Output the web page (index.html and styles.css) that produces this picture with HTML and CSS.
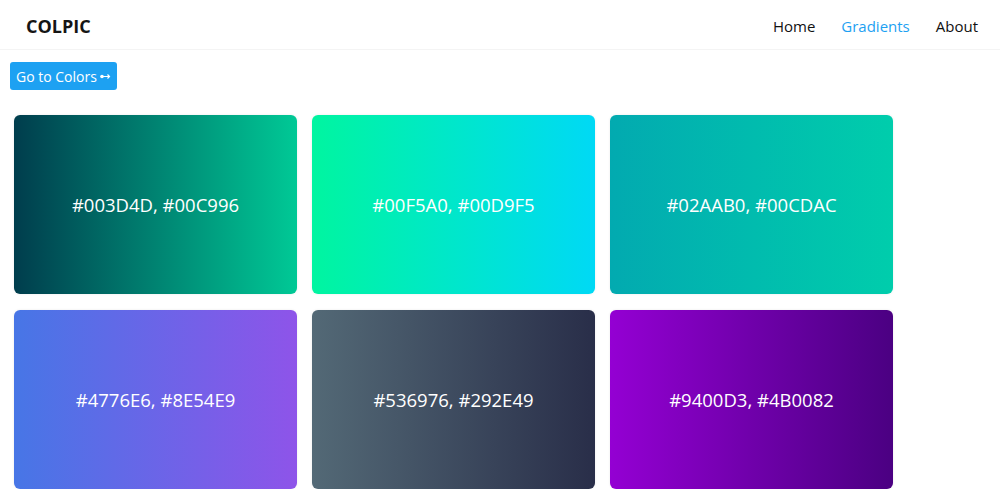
FILE: index.html
```html
<!DOCTYPE html>
<html lang="en">
<head>
  <meta charset="UTF-8">
  <title>Colpic - Gradients</title>
  <link rel="stylesheet" href="styles.css">
</head>
<body>

  <header class="topbar">
    <div class="brand">COLPIC</div>
    <nav class="nav">
      <a href="#">Home</a>
      <a href="#" class="active">Gradients</a>
      <a href="#">About</a>
    </nav>
  </header>

  <main class="content">
    <button class="go-btn">Go to Colors
      <svg class="go-icon" width="11" height="7" viewBox="0 0 11 7">
        <circle cx="2" cy="3.5" r="1.8" fill="#fff"/>
        <path d="M3 3.5 H9.5 M7.5 1.5 L9.5 3.5 L7.5 5.5" stroke="#fff" stroke-width="1.2" fill="none"/>
      </svg>
    </button>

    <div class="grid">
      <div class="card" style="background: linear-gradient(to right, #003D4D, #00C996)">#003D4D, #00C996</div>
      <div class="card" style="background: linear-gradient(to right, #00F5A0, #00D9F5)">#00F5A0, #00D9F5</div>
      <div class="card" style="background: linear-gradient(to right, #02AAB0, #00CDAC)">#02AAB0, #00CDAC</div>
      <div class="card" style="background: linear-gradient(to right, #4776E6, #8E54E9)">#4776E6, #8E54E9</div>
      <div class="card" style="background: linear-gradient(to right, #536976, #292E49)">#536976, #292E49</div>
      <div class="card" style="background: linear-gradient(to right, #9400D3, #4B0082)">#9400D3, #4B0082</div>
    </div>
  </main>

</body>
</html>
```

FILE: styles.css
```css
body {
  margin: 0;
  background-color: #fff;
  font-family: "Open Sans", "Noto Sans", sans-serif;
  color: #111;
}

.topbar {
  height: 50px;
  display: flex;
  align-items: center;
  justify-content: space-between;
  padding: 3px 22px 0 26px;
  border-bottom: 1px solid #f4f4f4;
  box-sizing: border-box;
}

.brand {
  font-size: 18px;
  font-weight: bold;
  color: #151515;
}

.nav {
  display: flex;
  gap: 26px;
}

.nav a {
  font-size: 15px;
  color: #111;
  text-decoration: none;
}

.nav a.active {
  color: #1da1f2;
}

.content {
  padding: 12px 0 0 10px;
}

.go-btn {
  height: 28px;
  padding: 0 6px;
  background-color: #1da1f2;
  border: none;
  border-radius: 3px;
  color: white;
  font-family: inherit;
  font-size: 14px;
  cursor: pointer;
  display: flex;
  align-items: center;
  gap: 3px;
}

.go-icon {
  margin-top: 1px;
}

.grid {
  display: grid;
  grid-template-columns: repeat(3, 283px);
  grid-auto-rows: 179px;
  column-gap: 15px;
  row-gap: 16px;
  margin: 25px 0 0 4px;
}

.card {
  border-radius: 6px;
  box-shadow: 0 0 3px rgba(0,0,0,0.08);
  display: flex;
  align-items: center;
  justify-content: center;
  color: white;
  font-size: 18.5px;
}
```
